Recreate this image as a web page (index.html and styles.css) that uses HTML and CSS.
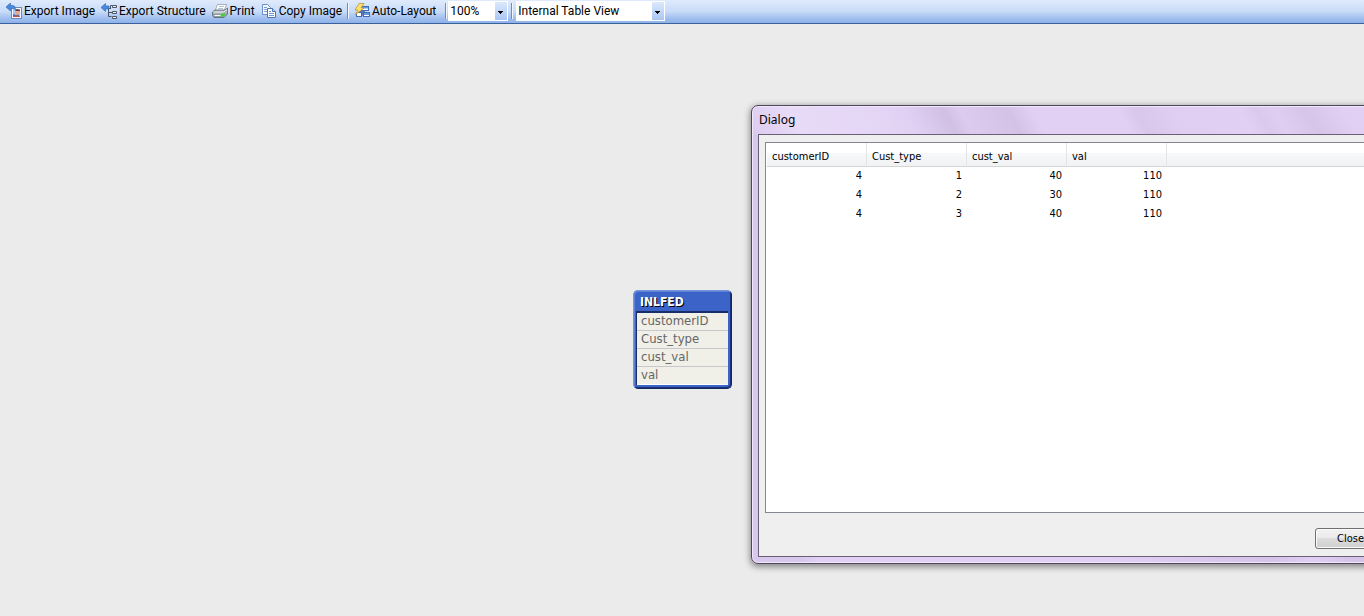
FILE: index.html
```html
<!DOCTYPE html>
<html lang="en">
<head>
<meta charset="utf-8">
<title>Table Viewer</title>
<link rel="stylesheet" href="styles.css">
</head>
<body>
<header class="toolbar">
  <button class="tool" type="button">
    <svg class="icon" viewBox="0 0 16 16" aria-hidden="true">
      <rect x="5.500" y="4.500" width="10" height="11" fill="#f5f8ff" stroke="#7189b8"/>
      <path d="M7 6h7v8H7z" fill="#a9c2ee"/><path d="M7 14v-3l3 1 2-1 2 3z" fill="#4d6fb2"/>
      <path d="M9 8l2-2 3 1v3l-2 2-3-1z" fill="#e2a993"/><path d="M9 7l2-1 3 1v1h-4z" fill="#5b3b4c"/>
      <path d="M7 14l3-2 4 2z" fill="#c9503f"/>
      <path d="M0 4l4.500-4v2.500h2q3 0 3 4Q8 5 4.500 5.500V8z" fill="#4a8add" stroke="#2a62b4" stroke-width=".6"/>
    </svg><span>Export Image</span></button>
  <button class="tool" type="button">
    <svg class="icon" viewBox="0 0 16 16" aria-hidden="true">
      <path d="M8 5.500h2M7.500 5.500v8h3M7.500 9.500h4M9.500 5.500v-3h2" fill="none" stroke="#4a5263"/>
      <path d="M11.500 2.500h4v2h-4zM11.500 8.500h4v2h-4zM11.500 13.500h4v2h-4z" fill="#eef4ff" stroke="#4d5464"/>
      <path d="M0 4.500l4.500-4V3H8v3H4.500v2.500z" fill="#4a8add" stroke="#2a62b4" stroke-width=".6"/>
    </svg><span>Export Structure</span></button>
  <button class="tool" type="button">
    <svg class="icon" viewBox="0 0 16 16" aria-hidden="true">
      <path d="M5.500 1.500h9L12 8H3z" fill="#fff" stroke="#8792a2" stroke-width=".7"/>
      <path d="M7 3.500h5M6 5.500h5" stroke="#a5b2c6" stroke-width=".8"/>
      <path d="M.5 9L3 7h10l2.500-2v6L12 14.500H2L.5 12.500z" fill="#aab2bb" stroke="#56606c" stroke-width=".8"/>
      <path d="M1.500 9h10L15 6.500" fill="none" stroke="#edf0f3"/>
      <path d="M1.500 11.500h9v2h-8z" fill="#f6f8fa" stroke="#6a737d" stroke-width=".6"/>
      <path d="M10 10.500h4l-2 3H8z" fill="#45cf34"/>
    </svg><span>Print</span></button>
  <button class="tool" type="button">
    <svg class="icon" viewBox="0 0 16 16" aria-hidden="true">
      <path d="M1.500 1.500h5l3 3v7h-8z" fill="#f5f8ff" stroke="#6d8dc8"/>
      <path d="M3 4.500h3M3 6.500h4M3 8.500h4" stroke="#7f9fd6"/>
      <path d="M6.500 5.500h5l3 3v6h-8z" fill="#fff" stroke="#4c72b8"/>
      <path d="M11.500 5.500v3h3" fill="#c3d5f3" stroke="#4c72b8"/>
      <path d="M8 8.500h2M8 10.500h5M8 12.500h5" stroke="#6f95d6"/>
    </svg><span>Copy Image</span></button>
  <span class="divider"></span>
  <button class="tool" type="button">
    <svg class="icon" viewBox="0 0 16 16" aria-hidden="true">
      <path d="M3 8.500h8M8.500 8.500v4h2" fill="none" stroke="#5b76a8"/>
      <rect x="7.500" y="3.500" width="7" height="4" fill="#fff" stroke="#3f6fb9"/><path d="M8 4h6v1.500H8z" fill="#609be2"/>
      <rect x="9.500" y="9.500" width="6" height="4" fill="#fff" stroke="#3f6fb9"/><path d="M10 10h5v2h-5z" fill="#609be2"/>
      <rect x="2.500" y="9.500" width="5" height="4" fill="#fff" stroke="#3f6fb9"/>
      <path d="M5 .5h5L7 5h3L1 12l3-5H1z" fill="#ffe06a" stroke="#b98d2c" stroke-width=".7"/>
    </svg><span>Auto-Layout</span></button>
  <span class="divider divider-wide"></span>
  <span class="combo combo-zoom">
    <select class="combo-field" aria-label="Zoom"><option>100%</option></select>
    <svg class="combo-arrow" viewBox="0 0 12 18" aria-hidden="true"><path d="M3 9h5v1H7v1H6v1H5v-1H4v-1H3z" fill="#000"/></svg>
  </span>
  <span class="divider divider-tight"></span>
  <span class="combo combo-view">
    <select class="combo-field" aria-label="View"><option>Internal Table View</option></select>
    <svg class="combo-arrow" viewBox="0 0 12 18" aria-hidden="true"><path d="M3 9h5v1H7v1H6v1H5v-1H4v-1H3z" fill="#000"/></svg>
  </span>
</header>
<main class="canvas">
  <section class="node">
    <h2 class="node-title">INLFED</h2>
    <ul class="node-fields"><li>customerID</li><li>Cust_type</li><li>cust_val</li><li>val</li></ul>
  </section>
  <section class="dialog" role="dialog" aria-labelledby="dialog-title">
    <h2 class="dialog-title" id="dialog-title">Dialog</h2>
    <div class="dialog-body">
      <div class="list">
        <table class="grid">
          <thead><tr><th>customerID</th><th>Cust_type</th><th>cust_val</th><th>val</th><th class="rest"></th></tr></thead>
          <tbody>
            <tr><td>4</td><td>1</td><td>40</td><td>110</td><td class="rest"></td></tr>
            <tr><td>4</td><td>2</td><td>30</td><td>110</td><td class="rest"></td></tr>
            <tr><td>4</td><td>3</td><td>40</td><td>110</td><td class="rest"></td></tr>
          </tbody>
        </table>
      </div>
      <div class="actions"><button class="close" type="button">Close</button></div>
    </div>
  </section>
</main>
</body>
</html>
```
FILE: styles.css
```css
* { box-sizing: border-box; }
body {
  margin: 0;
  height: 100vh;
  display: flex;
  flex-direction: column;
  overflow: hidden;
  background: #ebebeb;
  color: #000;
  font: 11px/16px "DejaVu Sans Condensed", "Noto Sans", sans-serif;
}
h2 { margin: 0; font-size: inherit; font-weight: normal; }

.toolbar {
  flex: none;
  display: flex;
  align-items: center;
  height: 24px;
  gap: 6px;
  padding: 0 6px 1px;
  border-bottom: 1px solid #3b619c;
  background: linear-gradient(#dfebfc, #c8dbf8 50%, #a6c3f0 75%, #8db2e9);
  font: 12px/16px Roboto, sans-serif;
  white-space: nowrap;
}
.tool {
  display: flex;
  align-items: center;
  gap: 2px;
  padding: 0;
  border: 0;
  background: none;
  color: #000;
  font: inherit;
}
.icon { width: 16px; height: 16px; flex: none; }
.divider {
  width: 2px;
  height: 16px;
  margin: 0 -1px;
  border-left: 1px solid #6a8ccb;
  border-right: 1px solid #f1f6ff;
}
.divider-wide { margin-left: 3px; }
.divider-tight { margin: 0 -3px; }
.combo { position: relative; display: flex; height: 20px; background: #fff; }
.combo-zoom { width: 60px; margin-left: -4px; }
.combo-view { width: 149px; }
.combo-field {
  appearance: none;
  width: 100%;
  padding: 0 14px 0 2px;
  border: 0;
  background: #fff;
  color: #000;
  font: inherit;
}
.combo-arrow {
  position: absolute;
  top: 1px;
  right: 1px;
  width: 12px;
  height: 18px;
  background: linear-gradient(#dce9fc, #a9c6f3);
  pointer-events: none;
}

.canvas { position: relative; flex: 1; overflow: hidden; }
.node {
  position: absolute;
  left: 633px;
  top: 266px;
  width: 99px;
  padding: 1px 3px 3px 2px;
  border: 1px solid #12285f;
  border-top-color: #7795dc;
  border-left-color: #7795dc;
  border-radius: 5px;
  background: #3c63c8;
  box-shadow: inset -1px -1px 0 #173078, inset 1px 1px 0 #5e82d8;
}
.node-title {
  height: 19px;
  padding-left: 4px;
  color: #fff;
  font: bold 12px/20px "DejaVu Sans Condensed", sans-serif;
  text-shadow: 1px 1px 0 #000;
}
.node-fields {
  margin: 0;
  padding: 0;
  list-style: none;
  border-top: 2px solid #182e68;
  border-left: 1px solid #182e68;
  background: #f0f0e8;
  color: #666;
  font: 13px/16px "DejaVu Sans Condensed", sans-serif;
}
.node-fields li { height: 18px; padding-left: 4px; border-bottom: 1px solid #c8c8cc; }
.node-fields li:last-child { border-bottom-color: #fff; }

.dialog {
  position: absolute;
  left: 751px;
  right: -36px;
  top: 81px;
  bottom: 52px;
  display: flex;
  flex-direction: column;
  padding: 0 6px 6px;
  border: 1px solid #51455e;
  border-radius: 7px;
  background:
    linear-gradient(60deg, #dccbf0, #e8dbf7 45px, #e4d5f5 120px, #e0d0f3 145px, #d1c0e4 178px, #dccbef 192px, #d3c1e6 234px, #e1d0f4 254px, #e1d0f4 330px, #d8c6eb 344px, #dfcef2 375px, #e1d0f4 435px, #dac8ed 450px, #dfcef2 465px, #d6c4e9 492px, #e1d0f4 525px) 0 0 / 100% 29px no-repeat,
    linear-gradient(90deg, #d9c8ee 50px, #e1d0f4 66px, #e1d0f4 360px, #d5c3e8 520px, #e1d0f4 560px, #d5c3e8 600px);
  box-shadow: inset 0 0 0 1px #f0e7fa, 0 2px 6px 1px #888;
}
.dialog-title {
  height: 28px;
  padding: 6px 1px;
  font: 12px/16px "Noto Sans", sans-serif;
}
.dialog-body {
  flex: 1;
  display: flex;
  flex-direction: column;
  padding: 7px 6px;
  border: 1px solid #695f77;
  background: #efefef;
}
.list { flex: 1; padding-left: 1px; border: 1px solid #828790; background: #fff; overflow: hidden; }
.grid { width: 100%; border-collapse: separate; border-spacing: 0; table-layout: fixed; }
.grid th {
  width: 100px;
  height: 24px;
  padding: 4px 5px 0;
  border-right: 1px solid #e3e4e6;
  border-bottom: 1px solid #d5d5d5;
  background: linear-gradient(#fff 42%, #f7f8fa 43%, #f1f2f4);
  font-weight: normal;
  text-align: left;
}
.grid td { height: 19px; padding: 0 5px 2px; text-align: right; }
.grid .rest { width: auto; }
.actions { display: flex; justify-content: flex-end; padding-top: 15px; }
.close {
  width: 71px;
  height: 21px;
  padding: 0;
  border: 1px solid #707070;
  border-radius: 3px;
  background: linear-gradient(#f2f2f2, #ebebeb 49%, #dddddd 50%, #cfcfcf);
  box-shadow: inset 0 0 0 1px #fbfbfb;
  color: #000;
  font: inherit;
}
```
